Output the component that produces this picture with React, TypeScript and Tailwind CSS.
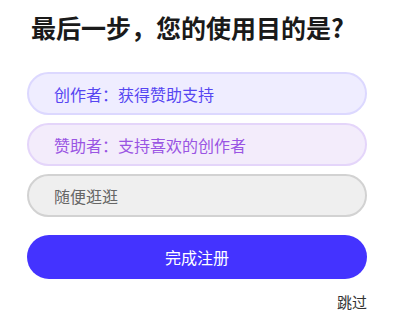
const font = { fontFamily: '"Noto Sans CJK SC", "Noto Sans", sans-serif' }

const options = [
  {
    label: '创作者：获得赞助支持',
    cls: 'bg-[#efedff] border-[#dcd8ff] text-[#5646f2]',
  },
  {
    label: '赞助者：支持喜欢的创作者',
    cls: 'bg-[#f3ecfb] border-[#e4d5fa] text-[#9a55e3]',
  },
  {
    label: '随便逛逛',
    cls: 'bg-[#efefef] border-[#d2d2d2] text-[#666666]',
  },
]

export default function App() {
  return (
    <div className="w-[400px] h-[325px] bg-white overflow-hidden" style={font}>
      <div className="pl-[27px] w-[367px] pt-[10px]">
        <h1 className="pl-[4px] text-[25px] leading-[34px] font-bold text-[#1a1a1a]">
          最后一步，您的使用目的是?
        </h1>
        <div className="mt-[28px] flex flex-col gap-[8px]">
          {options.map((o) => (
            <button
              key={o.label}
              className={`h-[43px] w-full rounded-full border-2 pl-[25px] text-left text-[16px] ${o.cls}`}
            >
              {o.label}
            </button>
          ))}
        </div>
        <button className="mt-[18px] h-[44px] w-full rounded-full bg-[#4433ff] text-white text-[16px]">
          完成注册
        </button>
        <div className="mt-[12px] flex justify-end">
          <span className="text-[15px] text-[#333333]">跳过</span>
        </div>
      </div>
    </div>
  )
}
